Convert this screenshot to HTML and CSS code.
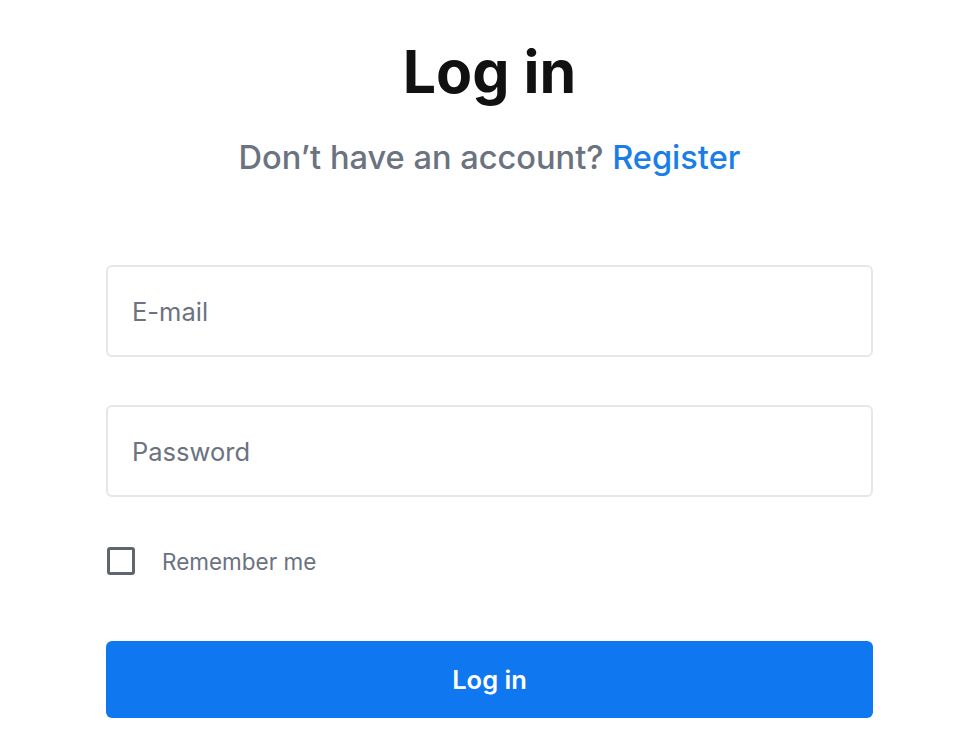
FILE: index.html
```html
<!DOCTYPE html>
<html lang="en">
<head>
  <meta charset="UTF-8" />
  <meta name="viewport" content="width=device-width, initial-scale=1.0"/>
  <title>Log in</title>
  <link rel="stylesheet" href="styles.css">
</head>
<body>
  <div class="login">
    <h1>Log in</h1>
    <p class="subtitulo">Don’t have an account? <a href="#">Register</a></p>

    <form class="form-login">
      <input type="email" placeholder="E-mail">
      <input type="password" placeholder="Password">
      <label class="lembrar">
        <input type="checkbox">
        <span>Remember me</span>
      </label>
      <button type="submit">Log in</button>
    </form>
  </div>
</body>
</html>
```

FILE: styles.css
```css
body {
  margin: 0;
  font-family: Inter, "Noto Sans", sans-serif;
  background-color: #ffffff;
}

.login {
  width: 767px;
  margin-left: 106px;
  padding-top: 36px;
}

h1 {
  margin: 0;
  font-size: 59px;
  font-weight: 700;
  line-height: 72px;
  color: #111111;
  text-align: center;
}

.subtitulo {
  margin: 29px 0 0;
  font-size: 32.6px;
  font-weight: 500;
  line-height: 40px;
  color: #6b7280;
  text-align: center;
}

.subtitulo a {
  color: #1a7ee8;
  text-decoration: none;
}

.form-login {
  display: flex;
  flex-direction: column;
  margin-top: 88px;
}

.form-login input[type="email"],
.form-login input[type="password"] {
  height: 92px;
  box-sizing: border-box;
  padding: 0 24px;
  border: 2px solid #e5e7eb;
  border-radius: 6px;
  font-family: inherit;
  font-size: 25.5px;
  color: #111;
  margin-bottom: 48px;
}

.form-login input::placeholder {
  color: #6b7280;
}

.lembrar {
  display: flex;
  align-items: center;
  gap: 27px;
  height: 28px;
  margin-top: 2px;
  font-size: 22.5px;
  color: #6b7280;
}

.lembrar input {
  appearance: none;
  flex: none;
  margin: 0 0 0 1px;
  width: 28px;
  height: 28px;
  border: 3px solid #5f6670;
  border-radius: 3px;
}

.form-login button {
  margin-top: 66px;
  height: 77px;
  border: none;
  border-radius: 6px;
  background-color: #0f77f0;
  color: white;
  font-family: inherit;
  font-size: 25.5px;
  font-weight: 600;
  cursor: pointer;
}
```
